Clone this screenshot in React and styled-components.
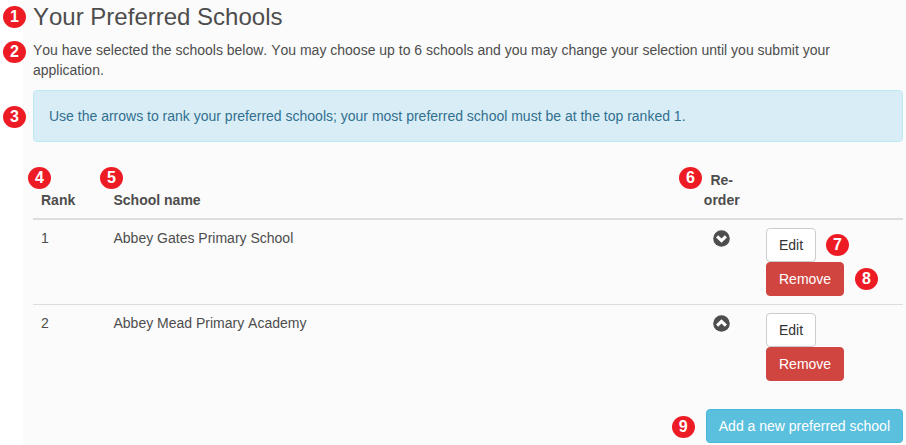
import styled, { createGlobalStyle } from 'styled-components'

//********************************************************//
//Styles
//********************************************************//

const GlobalStyle = createGlobalStyle`
  * {
    box-sizing: border-box;
  }

  body {
    margin: 0;
    background: #fff;
    color: #4d4d4d;
    font-family: 'Liberation Sans', Arial, sans-serif;
    font-size: 14px;
    font-kerning: none;
    line-height: 20px;
    overflow: hidden;
  }
`

const Page = styled.main`
  height: 445px;
  margin-left: 23px;
  padding: 4px 3px 0 10px;
  background: #fbfbfb;
`

const Anchor = styled.div`
  position: relative;
  width: ${(props) => (props.$fit ? 'fit-content' : 'auto')};
`

const Marker = styled.span`
  position: absolute;
  left: ${(props) => props.$x}px;
  top: ${(props) => props.$y}px;
  width: 23px;
  height: 22px;
  border-radius: 50%;
  background: #ed1c24;
  color: #fff;
  font-size: 16px;
  font-weight: bold;
  line-height: 22px;
  text-align: center;
`

const Title = styled.h1`
  margin: 0 0 10px;
  font-size: 24px;
  font-weight: normal;
  line-height: 26px;
`

const Intro = styled.p`
  max-width: 840px;
  margin: 0 0 10px;
`

const Alert = styled.div`
  margin-bottom: 20px;
  padding: 15px;
  border: 1px solid #bce8f1;
  border-radius: 4px;
  background: #d9edf7;
  color: #31708f;
`

const Row = styled.div`
  display: grid;
  grid-template-columns: 72.5px 580px 72.5px 145px;
  align-items: ${(props) => (props.$head ? 'end' : 'start')};
  border-bottom: ${(props) => props.$line || 0}px solid #ddd;
  font-weight: ${(props) => (props.$head ? 'bold' : 'normal')};
`

const Cell = styled.div`
  position: relative;
  padding: 8px;
  text-align: ${(props) => (props.$center ? 'center' : 'left')};
`

const Actions = styled(Cell)`
  display: flex;
  flex-direction: column;
  align-items: flex-start;
`

const Button = styled.button`
  display: block;
  height: 34px;
  padding: 0 12px;
  border: 1px solid ${(props) => props.$border};
  border-radius: 4px;
  background: ${(props) => props.$bg};
  color: ${(props) => props.$color || '#fff'};
  font: inherit;
  font-kerning: none;
  white-space: nowrap;
  cursor: pointer;
`

const ArrowIcon = styled.svg`
  display: block;
  width: 17px;
  height: 17px;
  margin: 2px auto 0;
  transform: ${(props) => (props.$up ? 'scaleY(-1)' : 'none')};
`

const Footer = styled.div`
  display: flex;
  justify-content: flex-end;
  margin-top: 20px;
`

//********************************************************//
//Parts
//********************************************************//

const Arrow = ({ up }) => (
  <ArrowIcon $up={up} viewBox="0 0 17 17" aria-label={up ? 'Move up' : 'Move down'}>
    <circle cx="8.5" cy="8.5" r="8.3" fill="#4d4d4d" />
    <path d="M4.1 6.4L8.5 10.6L12.9 6.4" fill="none" stroke="#fff" strokeWidth="3.1" />
  </ArrowIcon>
)

const SchoolRow = ({ rank, name, up, line, markers }) => (
  <Row $line={line}>
    <Cell>{rank}</Cell>
    <Cell>{name}</Cell>
    <Cell $center>
      <Arrow up={up} />
    </Cell>
    <Actions>
      <Button $bg="#fff" $border="#ccc" $color="#333">
        Edit
      </Button>
      <Button $bg="#d04540" $border="#d04540">
        Remove
      </Button>
      {markers}
    </Actions>
  </Row>
)

//********************************************************//

const App = () => {
  return (
    <>
      <GlobalStyle />
      <Page>
        <Anchor>
          <Title>Your Preferred Schools</Title>
          <Marker $x={-30} $y={2}>1</Marker>
        </Anchor>
        <Anchor>
          <Intro>
            You have selected the schools below. You may choose up to 6 schools
            and you may change your selection until you submit your application.
          </Intro>
          <Marker $x={-30} $y={1}>2</Marker>
        </Anchor>
        <Anchor>
          <Alert>
            Use the arrows to rank your preferred schools; your most preferred
            school must be at the top ranked 1.
          </Alert>
          <Marker $x={-30} $y={16}>3</Marker>
        </Anchor>

        <Row $head $line={2}>
          <Cell>
            Rank
            <Marker $x={-5} $y={-15}>4</Marker>
          </Cell>
          <Cell>
            School name
            <Marker $x={-5.5} $y={-15}>5</Marker>
          </Cell>
          <Cell $center>
            Re-order
            <Marker $x={-6.5} $y={5}>6</Marker>
          </Cell>
        </Row>
        <SchoolRow
          rank={1}
          name="Abbey Gates Primary School"
          line={1}
          markers={
            <>
              <Marker $x={68} $y={14}>7</Marker>
              <Marker $x={97} $y={48}>8</Marker>
            </>
          }
        />
        <SchoolRow rank={2} name="Abbey Mead Primary Academy" up />

        <Footer>
          <Anchor $fit>
            <Button $bg="#5bc0de" $border="#46b8da">
              Add a new preferred school
            </Button>
            <Marker $x={-34} $y={7}>9</Marker>
          </Anchor>
        </Footer>
      </Page>
    </>
  )
}

export default App
